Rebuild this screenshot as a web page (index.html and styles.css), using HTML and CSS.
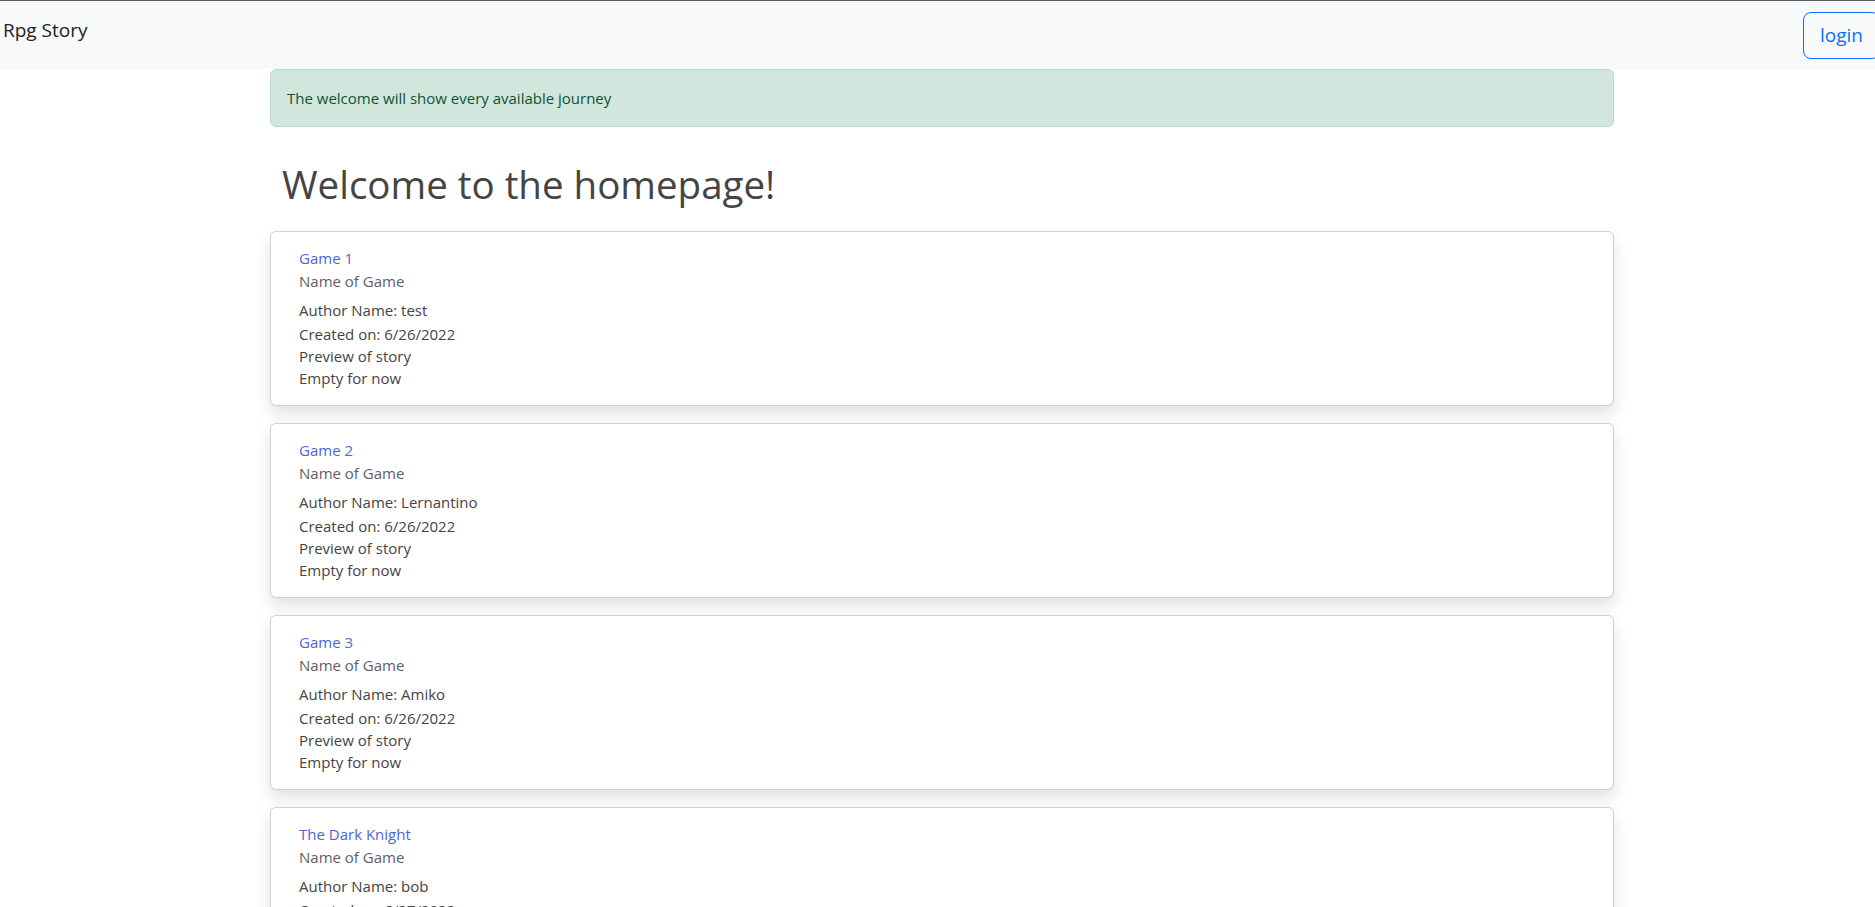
FILE: index.html
```html
<!DOCTYPE html>
<html lang="en">
<head>
<meta charset="utf-8">
<title>Rpg Story</title>
<link rel="stylesheet" href="styles.css">
</head>
<body>
<nav class="navbar">
  <a class="brand" href="#">Rpg Story</a>
  <button class="btn-login" type="button">login</button>
</nav>
<main class="content">
  <div class="alert">The welcome will show every available journey</div>
  <h1 class="page-title">Welcome to the homepage!</h1>

  <div class="card">
    <div class="card-title">Game 1</div>
    <div class="card-subtitle">Name of Game</div>
    <div class="card-author">Author Name: test</div>
    <div class="card-date">Created on: 6/26/2022</div>
    <div class="card-line">Preview of story</div>
    <div class="card-line">Empty for now</div>
  </div>

  <div class="card">
    <div class="card-title">Game 2</div>
    <div class="card-subtitle">Name of Game</div>
    <div class="card-author">Author Name: Lernantino</div>
    <div class="card-date">Created on: 6/26/2022</div>
    <div class="card-line">Preview of story</div>
    <div class="card-line">Empty for now</div>
  </div>

  <div class="card">
    <div class="card-title">Game 3</div>
    <div class="card-subtitle">Name of Game</div>
    <div class="card-author">Author Name: Amiko</div>
    <div class="card-date">Created on: 6/26/2022</div>
    <div class="card-line">Preview of story</div>
    <div class="card-line">Empty for now</div>
  </div>

  <div class="card">
    <div class="card-title">The Dark Knight</div>
    <div class="card-subtitle">Name of Game</div>
    <div class="card-author">Author Name: bob</div>
    <div class="card-date">Created on: 6/27/2022</div>
    <div class="card-line">Preview of story</div>
    <div class="card-line">Empty for now</div>
  </div>
</main>
</body>
</html>
```
FILE: styles.css
```css
html, body {
  margin: 0;
  padding: 0;
  overflow: hidden;
  background: #ffffff;
}

body {
  font-family: "Open Sans", "Noto Sans", sans-serif;
  font-size: 15px;
  color: #444444;
}

.navbar {
  display: flex;
  justify-content: space-between;
  align-items: flex-start;
  height: 68px;
  background: #f8f9fa;
  border-top: 1px solid #5a5a5a;
  overflow: hidden;
}

.brand {
  display: block;
  padding: 14px 0 0 3px;
  font-size: 19px;
  line-height: 30px;
  color: #222222;
  text-decoration: none;
}

.btn-login {
  margin: 11px -5px 0 0;
  padding: 7px 16px 8px;
  font-family: inherit;
  font-size: 19px;
  line-height: 30px;
  color: #0d6efd;
  background: transparent;
  border: 1px solid #0d6efd;
  border-radius: 8px;
}

.content {
  width: 1344px;
  margin-left: 270px;
}

.alert {
  padding: 16px 16px;
  line-height: 24px;
  background: #d1e7dd;
  border: 1px solid #badbcc;
  border-radius: 6px;
  color: #0f5132;
}

.page-title {
  margin: 33px 0 23px;
  padding-left: 12px;
  font-size: 38.5px;
  line-height: 48px;
  font-weight: 400;
  color: #444444;
}

.card {
  margin-bottom: 17px;
  padding: 15px 28px 16px;
  background: #ffffff;
  border: 1px solid rgba(0, 0, 0, 0.175);
  border-radius: 6px;
  box-shadow: 0 8px 16px rgba(0, 0, 0, 0.12);
  line-height: 22px;
}

.card-title {
  color: #4d66d4;
}

.card-subtitle {
  margin-top: 1px;
  color: #5f5f5f;
}

.card-author {
  margin-top: 7px;
}

.card-date {
  margin-top: 2px;
}
```
